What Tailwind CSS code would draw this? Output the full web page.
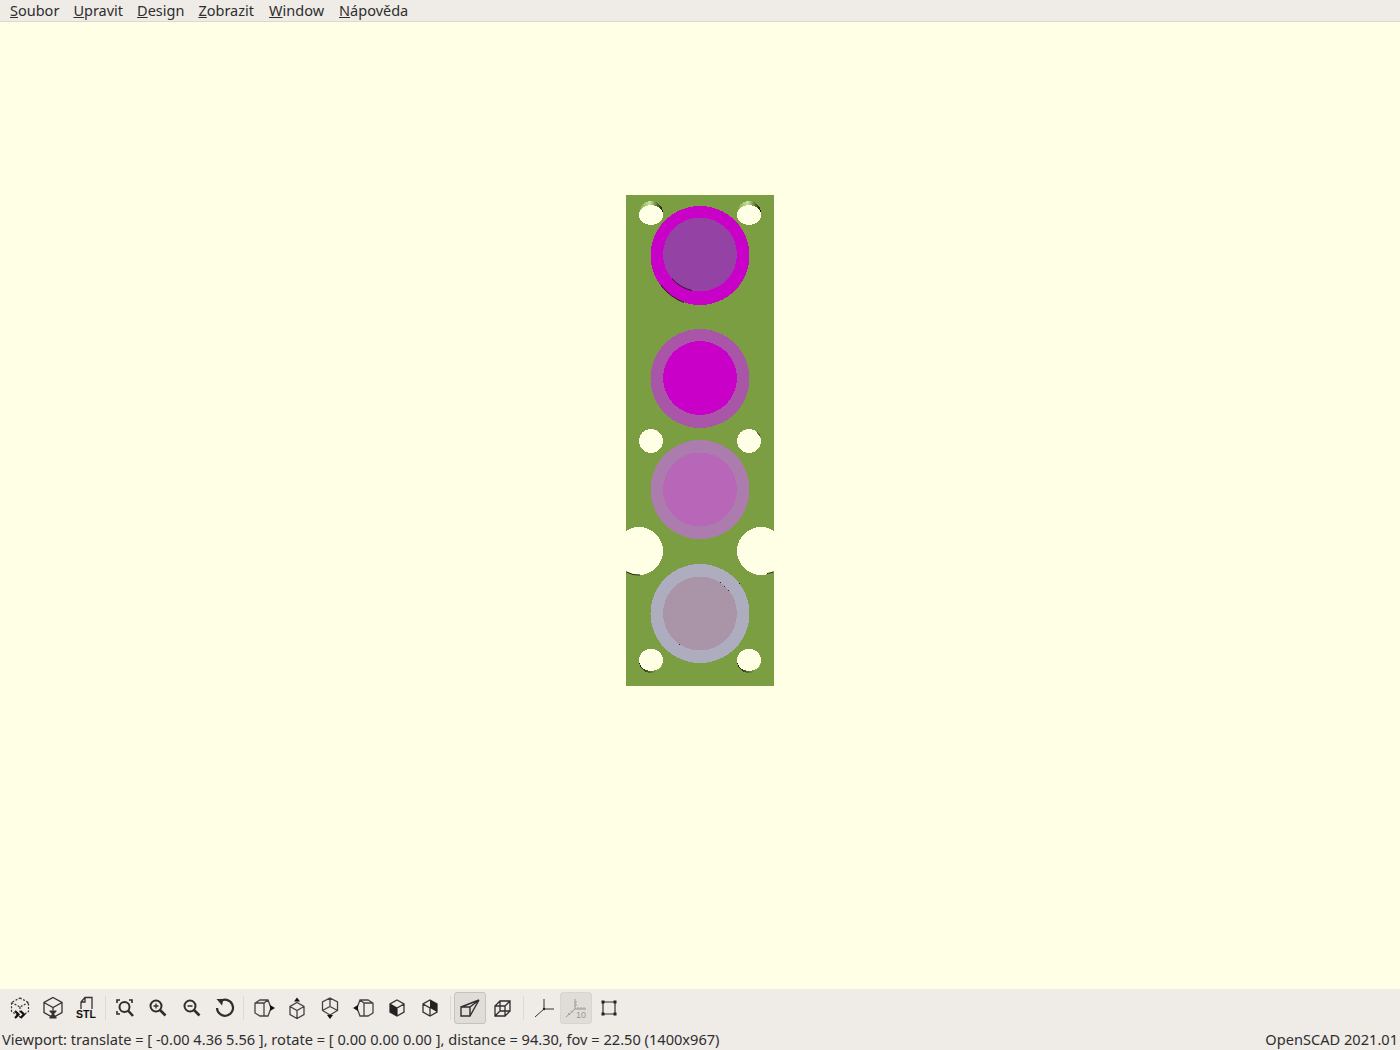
<!DOCTYPE html>
<html lang="cs">
<head>
  <meta charset="UTF-8" />
  <meta name="viewport" content="width=device-width, initial-scale=1.0" />
  <title>OpenSCAD</title>
  <script src="https://cdn.jsdelivr.net/npm/@tailwindcss/browser@4"></script>
</head>
<body class="h-screen w-full overflow-hidden bg-[#efebe7] text-[#2e2e2e] font-['Noto_Sans',sans-serif]">
<div class="flex h-[1050px] flex-col">

  <!-- Menu -->
  <nav class="flex h-[22px] shrink-0 items-center border-b border-[#dcd8d3] pl-[3px] text-[14.5px] leading-none">
    <a href="#" class="px-[7px]"><span class="underline">S</span>oubor</a>
    <a href="#" class="px-[7px]"><span class="underline">U</span>pravit</a>
    <a href="#" class="px-[7px]"><span class="underline">D</span>esign</a>
    <a href="#" class="px-[7px]"><span class="underline">Z</span>obrazit</a>
    <a href="#" class="ml-px px-[7px]"><span class="underline">W</span>indow</a>
    <a href="#" class="ml-px px-[7px]"><span class="underline">N</span>ápověda</a>
  </nav>

  <!-- 3D viewport -->
  <main class="h-[967px] shrink-0 bg-[#ffffe5]">
    <svg width="1400" height="967" viewBox="0 22 1400 967" class="block">
      <defs>
        <linearGradient id="shadeTop" x1="0" x2="1" y1="0" y2="0">
          <stop offset="0" stop-color="#7fa542" />
          <stop offset="0.45" stop-color="#c8e39a" />
          <stop offset="0.75" stop-color="#5d7a30" />
          <stop offset="1" stop-color="#0c1005" />
        </linearGradient>
        <linearGradient id="shadeBottom" x1="0" x2="1" y1="0" y2="0">
          <stop offset="0" stop-color="#0c1005" />
          <stop offset="0.5" stop-color="#5d7a30" />
          <stop offset="1" stop-color="#a5cc5c" />
        </linearGradient>
      </defs>
      <g shape-rendering="crispEdges">
        <rect x="626" y="195" width="148" height="491" fill="#7c9e42" />

        <!-- corner holes, with the inside wall showing -->
        <circle cx="651" cy="213" r="12" fill="url(#shadeTop)" />
        <circle cx="749" cy="213" r="12" fill="url(#shadeTop)" />
        <circle cx="651" cy="661" r="12" fill="url(#shadeBottom)" />
        <circle cx="749" cy="661" r="12" fill="url(#shadeBottom)" />
        <ellipse cx="651" cy="215" rx="12" ry="10" fill="#ffffe5" />
        <ellipse cx="749" cy="215" rx="12" ry="10" fill="#ffffe5" />
        <ellipse cx="651" cy="660" rx="12" ry="11" fill="#ffffe5" />
        <ellipse cx="749" cy="660" rx="12" ry="11" fill="#ffffe5" />
        <circle cx="651" cy="441" r="12" fill="#ffffe5" />
        <circle cx="749" cy="441" r="12" fill="#ffffe5" />

        <!-- side cutouts -->
        <circle cx="639" cy="551" r="24" fill="#ffffe5" />
        <circle cx="761" cy="551" r="24" fill="#ffffe5" />

        <!-- lamps -->
        <circle cx="700" cy="255.500" r="49.500" fill="#c800c8" />
        <circle cx="700" cy="254.500" r="37" fill="#9443a5" />

        <circle cx="700" cy="378.500" r="49.500" fill="#a955a8" />
        <circle cx="700" cy="378" r="37" fill="#c800c8" />

        <circle cx="700" cy="489.500" r="49.500" fill="#ad7cae" />
        <circle cx="700" cy="489.500" r="37" fill="#b866b8" />

        <circle cx="700" cy="613.500" r="49.500" fill="#adadbf" />
        <circle cx="700" cy="613.500" r="37" fill="#a994a8" />

        <!-- z-fighting specks on the last lamp -->
        <g fill="#2b2b3a">
          <rect x="720" y="582" width="1" height="1" />
          <rect x="724" y="586" width="1" height="1" />
          <rect x="728" y="590" width="1" height="1" />
          <rect x="739" y="583" width="1" height="1" />
          <rect x="679" y="644" width="1" height="1" />
        </g>
      </g>

      <!-- z-fighting slivers -->
      <g fill="none" stroke="#20240f" stroke-width="1">
        <path d="M661 285A49.500 49.500 0 0 0 684 302.500" />
        <path d="M672 278.500A37 37 0 0 0 692 290.500" />
        <path d="M626.500 572A24 24 0 0 0 640 575" />
        <path d="M767 573.500A24 24 0 0 0 773 572" />
        <path d="M757 432.500A12 12 0 0 1 760 436" />
      </g>
    </svg>
  </main>

  <!-- Toolbar -->
  <div class="flex h-[37px] shrink-0 items-center pl-[3px]">
    <!-- preview -->
    <button class="flex h-[32px] w-[33px] items-center justify-center">
      <svg width="24" height="24" viewBox="0 0 24 24" fill="none" stroke="#333" stroke-width="1.200">
        <path stroke-dasharray="2 1.500" d="M12 2l8.500 4.500v9L12 21l-8.500-5.500v-9zM3.500 6.500L12 11l8.500-4.500M12 11v6" />
        <path stroke="#111" stroke-width="2.200" d="M7 15l3.500 3.500L7 22M12.500 15l3.500 3.500-3.500 3.500" />
      </svg>
    </button>
    <!-- render -->
    <button class="flex h-[32px] w-[33px] items-center justify-center">
      <svg width="24" height="24" viewBox="0 0 24 24" fill="none" stroke="#333" stroke-width="1.300">
        <path d="M12 1.500l9 5v10l-9 5-9-5v-10zM3 6.500l9 5 9-5M12 11.500v3" />
        <path fill="#333" stroke="none" d="M8.500 14.500h7v1l-2.500 2.500 2.500 3v1.500h-7V21l2.500-3-2.500-2.500z" />
      </svg>
    </button>
    <!-- export STL -->
    <button class="flex h-[32px] w-[34px] items-center justify-center">
      <svg width="24" height="24" viewBox="0 0 24 24" fill="none" stroke="#333" stroke-width="1.300">
        <path d="M7 13V6l4-4.500h7V13M7 6h4V1.500" />
        <text x="12" y="22" text-anchor="middle" fill="#111" stroke="none" font-family="Liberation Sans, sans-serif" font-weight="700" font-size="10.500">STL</text>
      </svg>
    </button>
    <div class="mx-[2px] h-[24px] w-px bg-[#dcd8d3]"></div>

    <!-- zoom all -->
    <button class="flex h-[32px] w-[33px] items-center justify-center">
      <svg width="24" height="24" viewBox="0 0 24 24" fill="none" stroke="#2e2e2e" stroke-width="2">
        <path stroke-width="1.600" d="M4 7V4h3M16 4h3v3M4 15v3h3" />
        <circle cx="11.500" cy="11" r="5" />
        <path stroke-width="2.600" d="M15 14.500l5 5.500" />
      </svg>
    </button>
    <button class="flex h-[32px] w-[34px] items-center justify-center">
      <svg width="24" height="24" viewBox="0 0 24 24" fill="none" stroke="#2e2e2e" stroke-width="2">
        <circle cx="10" cy="10" r="5.500" />
        <path stroke-width="1.300" d="M7.500 10h5M10 7.500v5" />
        <path stroke-width="2.600" d="M14 14l5.500 5.500" />
      </svg>
    </button>
    <button class="flex h-[32px] w-[33px] items-center justify-center">
      <svg width="24" height="24" viewBox="0 0 24 24" fill="none" stroke="#2e2e2e" stroke-width="2">
        <circle cx="10" cy="10" r="5.500" />
        <path stroke-width="1.500" d="M7.500 10h5" />
        <path stroke-width="2.600" d="M14 14l5.500 5.500" />
      </svg>
    </button>
    <!-- reset view -->
    <button class="flex h-[32px] w-[33px] items-center justify-center">
      <svg width="24" height="24" viewBox="0 0 24 24" fill="none" stroke="#2e2e2e" stroke-width="2.200">
        <path d="M7 5.500A8 8 0 1 1 4 12" />
        <path fill="#2e2e2e" stroke="none" d="M3.500 3l7 0-1.500 6.500z" />
      </svg>
    </button>
    <div class="ml-[2px] mr-[3px] h-[24px] w-px bg-[#dcd8d3]"></div>

    <!-- view directions -->
    <button class="flex h-[32px] w-[33px] items-center justify-center">
      <svg width="24" height="24" viewBox="0 0 24 24" fill="none" stroke="#444" stroke-width="1.300">
        <path d="M8 4h8l3 8-3 8H8l-5-3V7zM3 7h9l4-3M12 7v13" />
        <path fill="#111" stroke="none" d="M18 9l5 3-5 3z" />
      </svg>
    </button>
    <button class="flex h-[32px] w-[34px] items-center justify-center">
      <svg width="24" height="24" viewBox="0 0 24 24" fill="none" stroke="#444" stroke-width="1.300">
        <path d="M12 6.500l7 4v8l-7 4-7-4v-8zM5 10.500l7 4 7-4M12 14.500v8" />
        <path fill="#111" stroke="none" d="M12 1.500l3 4h-6z" />
      </svg>
    </button>
    <button class="flex h-[32px] w-[32px] items-center justify-center">
      <svg width="24" height="24" viewBox="0 0 24 24" fill="none" stroke="#444" stroke-width="1.300">
        <path d="M12 2l7.500 4v8.500L12 19l-7.500-4.500V6zM4.500 14.500L12 10.500l7.500 4M12 2v8.500" />
        <path fill="#111" stroke="none" d="M12 23l-3-4h6z" />
      </svg>
    </button>
    <button class="ml-[2px] flex h-[32px] w-[32px] items-center justify-center">
      <svg width="24" height="24" viewBox="0 0 24 24" fill="none" stroke="#444" stroke-width="1.300">
        <path d="M16 4H8L5 12l3 8h8l5-3V7zM21 7h-9L8 4M12 7v13" />
        <path fill="#111" stroke="none" d="M6 9l-5 3 5 3z" />
      </svg>
    </button>
    <button class="flex h-[32px] w-[33px] items-center justify-center">
      <svg width="24" height="24" viewBox="0 0 24 24" fill="none" stroke="#333" stroke-width="1.300">
        <path d="M12 4l7 4v8l-7 4-7-4V8zM5 8l7 4 7-4M12 12v8" />
        <path fill="#222" stroke="none" d="M5 8l7 4v8l-7-4z" />
      </svg>
    </button>
    <button class="flex h-[32px] w-[33px] items-center justify-center">
      <svg width="24" height="24" viewBox="0 0 24 24" fill="none" stroke="#333" stroke-width="1.300">
        <path d="M12 4l7 4v8l-7 4-7-4V8zM5 8l7 4v8M12 12l7-4" />
        <path fill="#222" stroke="none" d="M12 4l7 4v8l-7-4z" />
      </svg>
    </button>
    <div class="ml-[4px] mr-[3px] h-[24px] w-px bg-[#dcd8d3]"></div>

    <!-- perspective (checked) -->
    <button class="flex h-[32px] w-[32px] items-center justify-center rounded-[3px] border border-[#c5c1bc] bg-[#e0dcd8]">
      <svg width="24" height="24" viewBox="0 0 24 24" fill="none" stroke="#2e2e2e" stroke-width="1.400">
        <path d="M3 11h9v9H3zM3 11L21 4l-9 7M21 4l-9 16" />
      </svg>
    </button>
    <!-- orthogonal -->
    <button class="flex h-[32px] w-[33px] items-center justify-center">
      <svg width="24" height="24" viewBox="0 0 24 24" fill="none" stroke="#2e2e2e" stroke-width="1.300">
        <path d="M4 10h10v10H4zM9 5h10v10H9zM4 10l5-5M14 10l5-5M14 20l5-5M4 20l5-5" />
      </svg>
    </button>
    <div class="ml-[4px] mr-[3px] h-[24px] w-px bg-[#dcd8d3]"></div>

    <!-- show axes -->
    <button class="flex h-[32px] w-[33px] items-center justify-center">
      <svg width="24" height="24" viewBox="0 0 24 24" fill="none" stroke="#333" stroke-width="1">
        <path d="M12 13V3M12 13h10M12 13L3 21" />
        <circle cx="12" cy="13" r="1.200" fill="#222" stroke="none" />
      </svg>
    </button>
    <!-- scale markers (checked, disabled) -->
    <button class="flex h-[32px] w-[32px] items-center justify-center rounded-[3px] border border-[#d8d4cf] bg-[#e0dcd8]">
      <svg width="24" height="24" viewBox="0 0 24 24" fill="none" stroke="#9a9a9a" stroke-width="1">
        <path d="M11 3v10h11M11 13l-9 8M11 6h2M11 9h2M14 13v-2M17 13v-2M20 13v-2M4 17l2 2M7 14.500l2 2" />
        <text x="17" y="22" text-anchor="middle" fill="#999" stroke="none" font-family="Liberation Sans, sans-serif" font-size="9">10</text>
      </svg>
    </button>
    <!-- show edges -->
    <button class="flex h-[32px] w-[33px] items-center justify-center">
      <svg width="24" height="24" viewBox="0 0 24 24" fill="none" stroke="#333" stroke-width="1.200">
        <path d="M6 6h12v12H6z" />
        <g fill="#222" stroke="none">
          <rect x="4.500" y="4.500" width="3" height="3" />
          <rect x="16.500" y="4.500" width="3" height="3" />
          <rect x="4.500" y="16.500" width="3" height="3" />
          <rect x="16.500" y="16.500" width="3" height="3" />
        </g>
      </svg>
    </button>
  </div>

  <!-- Status bar -->
  <footer class="flex h-[24px] shrink-0 items-center justify-between pl-[2px] pr-[2px] pt-[3px] text-[14.6px] leading-none">
    <span>Viewport: translate = [ -0.00 4.36 5.56 ], rotate = [ 0.00 0.00 0.00 ], distance = 94.30, fov = 22.50 (1400x967)</span>
    <span>OpenSCAD 2021.01</span>
  </footer>
</div>
</body>
</html>
